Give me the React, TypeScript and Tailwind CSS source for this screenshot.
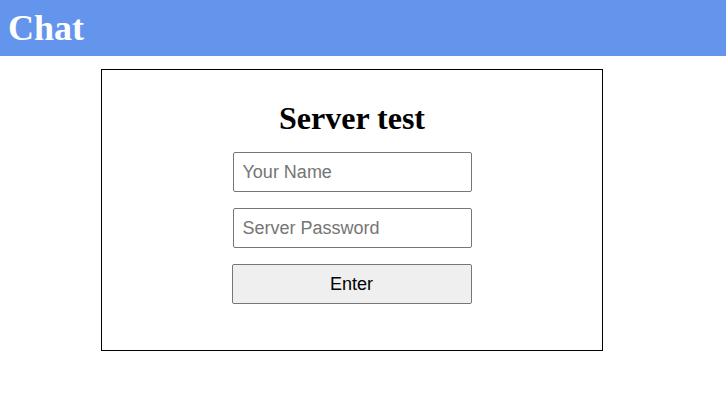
import React from "react";

export default function App() {
  return (
    <div className="w-[726px] h-[405px] bg-white">
      <header className="h-14 bg-[#6495ED] flex items-center pl-2">
        <h1 className="text-white font-bold text-[36px] leading-[40px] [font-family:'Liberation_Serif',serif]">Chat</h1>
      </header>
      <div className="ml-[101px] mt-[13px] w-[502px] h-[282px] border border-black flex flex-col items-center pt-[30px]">
        <h2 className="font-bold text-[32px] leading-[36px] text-black [font-family:'Liberation_Serif',serif]">Server test</h2>
        <div className="mt-4 flex flex-col gap-4 items-center [font-family:'Liberation_Sans',Arial,sans-serif]">
          <input
            type="text"
            placeholder="Your Name"
            className="w-[239px] h-10 border border-[#767676] rounded-[2px] px-[9px] text-[18px] text-black placeholder:text-[#757575] outline-none bg-white"
          />
          <input
            type="password"
            placeholder="Server Password"
            className="w-[239px] h-10 border border-[#767676] rounded-[2px] px-[9px] text-[18px] text-black placeholder:text-[#757575] outline-none bg-white"
          />
          <button className="w-[240px] h-10 border border-[#767676] rounded-[2px] bg-[#efefef] text-[18px] text-black -ml-[1px]">
            Enter
          </button>
        </div>
      </div>
    </div>
  );
}
